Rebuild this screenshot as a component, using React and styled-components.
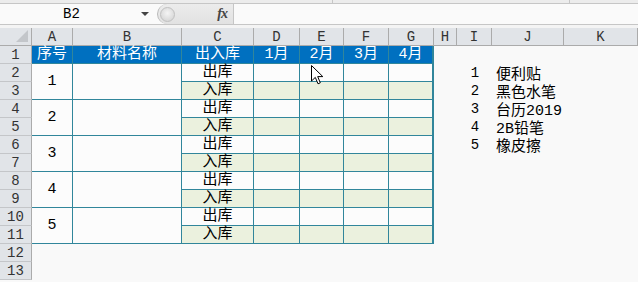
import React from "react";
import styled, { createGlobalStyle } from "styled-components";

const GlobalStyle = createGlobalStyle`
  html, body {
    margin: 0;
    padding: 0;
    background: #f9f9f9;
  }
  body {
    font-family: "Liberation Mono", "Noto Sans CJK SC", monospace;
    overflow: hidden;
  }
`;

const COLS = ["A", "B", "C", "D", "E", "F", "G", "H", "I", "J", "K"];
const WIDTHS = [41, 109, 72, 46, 44, 45, 45, 23, 35, 72, 74];
const ROWS = 13;
const TEAL = "#31869b";

const ITEMS = ["便利贴", "黑色水笔", "台历2019", "2B铅笔", "橡皮擦"];

export default function App() {
  const cells = [];

  // table header row (sheet row 1)
  ["序号", "材料名称", "出入库", "1月", "2月", "3月", "4月"].forEach((t, i) => {
    cells.push(
      <HeadCell key={`h${i}`} $row={2} $col={i + 2} $last={i === 6}>
        {t}
      </HeadCell>
    );
  });

  // body rows 2..11
  for (let n = 0; n < 5; n++) {
    const r = 3 + n * 2;
    cells.push(
      <DataCell key={`a${n}`} $row={r} $col={2} $span={2}>
        {n + 1}
      </DataCell>
    );
    cells.push(<DataCell key={`b${n}`} $row={r} $col={3} $span={2} />);
    ["出库", "入库"].forEach((t, k) => {
      const alt = k === 1;
      cells.push(
        <DataCell key={`c${n}${k}`} $row={r + k} $col={4} $alt={alt}>
          {t}
        </DataCell>
      );
      for (let c = 5; c <= 8; c++) {
        cells.push(
          <DataCell key={`m${n}${k}${c}`} $row={r + k} $col={c} $alt={alt} $last={c === 8} />
        );
      }
    });
  }

  // list in columns I and J
  ITEMS.forEach((t, i) => {
    cells.push(
      <ListNum key={`ln${i}`} $row={3 + i} $col={10}>
        {i + 1}
      </ListNum>
    );
    cells.push(
      <ListText key={`lt${i}`} $row={3 + i} $col={11}>
        {t}
      </ListText>
    );
  });

  return (
    <Page>
      <GlobalStyle />
      <TopStrip>
        <StripTick style={{ left: 332 }} />
        <StripTick style={{ left: 569 }} />
      </TopStrip>
      <FormulaBar>
        <NameBox>
          <NameText>B2</NameText>
          <DropArrow />
        </NameBox>
        <FxGroup>
          <RoundKnob />
          <Fx>fx</Fx>
        </FxGroup>
        <FormulaInput />
      </FormulaBar>
      <Gap />
      <Sheet>
        <Corner>
          <svg width="12" height="12" viewBox="0 0 12 12">
            <path d="M12 0 L12 12 L0 12 Z" fill="#c3c6ca" />
          </svg>
        </Corner>
        {COLS.map((c, i) => (
          <ColHead key={c} $col={i + 2}>
            {c}
          </ColHead>
        ))}
        {Array.from({ length: ROWS }, (_, i) => (
          <RowHead key={i} $row={i + 2}>
            {i + 1}
          </RowHead>
        ))}
        {cells}
      </Sheet>
      <Cursor>
        <svg width="13" height="20" viewBox="0 0 13 20">
          <path
            d="M0.5 0.5 L0.5 16 L4.3 12.4 L7 18.8 L9.3 17.8 L6.7 11.6 L11.8 11.6 Z"
            fill="#fff"
            stroke="#000"
            strokeWidth="1"
            strokeLinejoin="miter"
          />
        </svg>
      </Cursor>
    </Page>
  );
}

const Page = styled.div`
  position: relative;
  width: 638px;
  height: 282px;
  background: #f9f9f9;
  overflow: hidden;
`;

const TopStrip = styled.div`
  position: relative;
  height: 3px;
  background: #ececec;
  border-bottom: 1px solid #c6c6c6;
`;

const StripTick = styled.div`
  position: absolute;
  top: 0;
  width: 1px;
  height: 3px;
  background: #c6c6c6;
`;

const FormulaBar = styled.div`
  display: flex;
  height: 20px;
  background: #fafafa;
  border-bottom: 1px solid #c6c6c6;
`;

const NameBox = styled.div`
  width: 157px;
  display: flex;
  align-items: center;
`;

const NameText = styled.div`
  flex: 1;
  text-align: center;
  font-size: 14px;
  color: #000;
  padding-left: 2px;
`;

const DropArrow = styled.div`
  width: 0;
  height: 0;
  margin: 0 8px 0 0;
  border-left: 4px solid transparent;
  border-right: 4px solid transparent;
  border-top: 4px solid #444;
`;

const FxGroup = styled.div`
  width: 77px;
  display: flex;
  align-items: center;
  justify-content: space-between;
  background: linear-gradient(#ececec, #e2e2e2);
  border-left: 1px solid #b8b8b8;
  border-right: 1px solid #c6c6c6;
  border-radius: 10px 0 0 10px;
  padding: 0 6px 0 2px;
  box-sizing: border-box;
`;

const RoundKnob = styled.div`
  width: 13px;
  height: 13px;
  border-radius: 50%;
  background: radial-gradient(circle at 50% 40%, #f4f4f4, #cfcfcf);
  border: 1px solid #c0c0c0;
`;

const Fx = styled.span`
  font-family: "Liberation Serif", serif;
  font-style: italic;
  font-weight: bold;
  font-size: 14px;
  color: #444;
  letter-spacing: -1px;
`;

const FormulaInput = styled.div`
  flex: 1;
  background: #fafafa;
`;

const Gap = styled.div`
  height: 3px;
  background: #f4f4f4;
`;

const Sheet = styled.div`
  display: grid;
  grid-template-columns: 32px ${WIDTHS.map((w) => `${w}px`).join(" ")};
  grid-auto-rows: 18px;
`;

const place = ({ $row, $col, $span = 1 }) => `
  grid-row: ${$row} / span ${$span};
  grid-column: ${$col};
`;

const Corner = styled.div`
  grid-row: 1;
  grid-column: 1;
  background: #e1e4e8;
  border-right: 1px solid #ababab;
  border-bottom: 1px solid #ababab;
  box-sizing: border-box;
  display: flex;
  align-items: flex-end;
  justify-content: flex-end;
  padding: 0 3px 3px 0;
`;

const ColHead = styled.div`
  grid-row: 1;
  grid-column: ${({ $col }) => $col};
  background: #e1e4e8;
  border-right: 1px solid #ababab;
  border-bottom: 1px solid #ababab;
  box-sizing: border-box;
  display: flex;
  align-items: center;
  justify-content: center;
  font-size: 14px;
  color: #333;
`;

const RowHead = styled.div`
  grid-row: ${({ $row }) => $row};
  grid-column: 1;
  background: #e1e4e8;
  border-right: 1px solid #ababab;
  border-bottom: 1px solid #c4c6c9;
  box-sizing: border-box;
  display: flex;
  align-items: center;
  justify-content: center;
  font-size: 14px;
  color: #333;
`;

const BaseCell = styled.div`
  ${place}
  box-sizing: border-box;
  display: flex;
  align-items: center;
  justify-content: center;
  font-size: 15px;
  line-height: 1;
  border-bottom: 1px solid ${TEAL};
  border-right: ${({ $last }) => ($last ? 2 : 1)}px solid ${TEAL};
`;

const HeadCell = styled(BaseCell)`
  background: #0070c0;
  color: #fff;
`;

const DataCell = styled(BaseCell)`
  background: ${({ $alt }) => ($alt ? "#ebf1de" : "#fcfcfc")};
  color: #000;
`;

const ListNum = styled.div`
  ${place}
  display: flex;
  align-items: center;
  justify-content: center;
  font-size: 14px;
  color: #000;
  padding-left: 1px;
`;

const ListText = styled.div`
  ${place}
  display: flex;
  align-items: center;
  padding-left: 4px;
  font-size: 15px;
  color: #000;
  white-space: nowrap;
`;

const Cursor = styled.div`
  position: absolute;
  left: 311px;
  top: 65px;
  width: 13px;
  height: 20px;
  pointer-events: none;
`;
